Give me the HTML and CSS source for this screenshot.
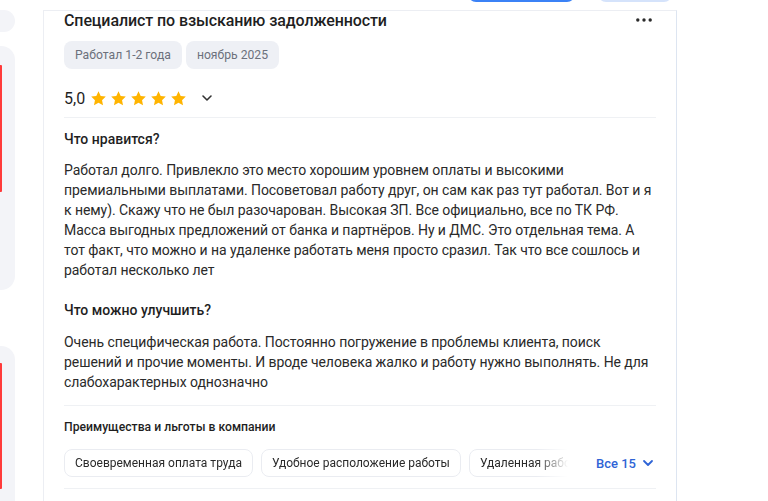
FILE: index.html
```html
<!DOCTYPE html>
<html lang="ru">
<head>
<meta charset="utf-8">
<title>Отзыв</title>
<link rel="stylesheet" href="styles.css">
</head>
<body>
<div class="page">
  <aside class="side">
    <div class="side-card side-card-a"></div>
    <div class="side-card side-card-b"><div class="side-mark side-mark-b"></div></div>
    <div class="side-card side-card-c"><div class="side-mark side-mark-c"></div></div>
  </aside>
  <main class="main">
    <div class="topbar">
      <div class="tbtn tbtn-primary"></div>
      <div class="tbtn tbtn-light"></div>
    </div>
    <section class="card">
      <div class="title-row">
        <h2 class="title">Специалист по взысканию задолженности</h2>
        <svg class="more" width="20" height="6" viewBox="0 0 20 6"><circle cx="1.8" cy="3" r="1.7"/><circle cx="8" cy="3" r="1.7"/><circle cx="14.2" cy="3" r="1.7"/></svg>
      </div>
      <div class="tags">
        <span class="tag">Работал 1-2 года</span>
        <span class="tag">ноябрь 2025</span>
      </div>
      <div class="rating">
        <span class="score">5,0</span>
        <span class="stars">
          <svg class="star" viewBox="0 0 24 24"><path d="M12 1.8l3.1 6.6 7.2.9-5.3 5 1.4 7.2L12 18l-6.4 3.5L7 14.3 1.7 9.3l7.2-.9z"/></svg>
          <svg class="star" viewBox="0 0 24 24"><path d="M12 1.8l3.1 6.6 7.2.9-5.3 5 1.4 7.2L12 18l-6.4 3.5L7 14.3 1.7 9.3l7.2-.9z"/></svg>
          <svg class="star" viewBox="0 0 24 24"><path d="M12 1.8l3.1 6.6 7.2.9-5.3 5 1.4 7.2L12 18l-6.4 3.5L7 14.3 1.7 9.3l7.2-.9z"/></svg>
          <svg class="star" viewBox="0 0 24 24"><path d="M12 1.8l3.1 6.6 7.2.9-5.3 5 1.4 7.2L12 18l-6.4 3.5L7 14.3 1.7 9.3l7.2-.9z"/></svg>
          <svg class="star" viewBox="0 0 24 24"><path d="M12 1.8l3.1 6.6 7.2.9-5.3 5 1.4 7.2L12 18l-6.4 3.5L7 14.3 1.7 9.3l7.2-.9z"/></svg>
        </span>
        <svg class="chev" width="12" height="8" viewBox="0 0 12 8"><path d="M2 2l4 4 4-4" fill="none" stroke="#333" stroke-width="1.6" stroke-linecap="round" stroke-linejoin="round"/></svg>
      </div>
      <div class="divider divider-a"></div>
      <h3 class="sub sub-first">Что нравится?</h3>
      <p class="text">Работал долго. Привлекло это место хорошим уровнем оплаты и высокими премиальными выплатами. Посоветовал работу друг, он сам как раз тут работал. Вот и я к нему). Скажу что не был разочарован. Высокая ЗП. Все официально, все по ТК РФ. Масса выгодных предложений от банка и партнёров. Ну и ДМС. Это отдельная тема. А тот факт, что можно и на удаленке работать меня просто сразил. Так что все сошлось и работал несколько лет</p>
      <h3 class="sub sub-second">Что можно улучшить?</h3>
      <p class="text">Очень специфическая работа. Постоянно погружение в проблемы клиента, поиск решений и прочие моменты. И вроде человека жалко и работу нужно выполнять. Не для слабохарактерных однозначно</p>
      <div class="divider divider-b"></div>
      <h4 class="perks-title">Преимущества и льготы в компании</h4>
      <div class="perks">
        <div class="chips">
          <span class="chip">Своевременная оплата труда</span>
          <span class="chip">Удобное расположение работы</span>
          <span class="chip">Удаленная работа</span>
        </div>
        <span class="all">Все 15
          <svg class="all-chev" width="12" height="8" viewBox="0 0 12 8"><path d="M2 2l4 4 4-4" fill="none" stroke="#2f64d6" stroke-width="1.8" stroke-linecap="round" stroke-linejoin="round"/></svg>
        </span>
      </div>
      <div class="divider divider-c"></div>
    </section>
  </main>
</div>
</body>
</html>
```
FILE: styles.css
```css
* { box-sizing: border-box; }
html, body { margin: 0; padding: 0; }
body {
  width: 768px;
  height: 501px;
  overflow: hidden;
  background: #fff;
  font-family: Roboto, "Liberation Sans", Arial, sans-serif;
  color: #1f1f1f;
}
.page {
  display: flex;
  height: 501px;
}
.side {
  width: 15px;
  flex: none;
  overflow: hidden;
  display: flex;
  flex-direction: column;
}
.side-card {
  width: 15px;
  background: #f3f4f8;
  border-radius: 0 14px 14px 0;
  flex: none;
}
.side-card-a { height: 22px; margin-top: 10px; }
.side-card-b { height: 244px; margin-top: 14px; }
.side-card-c { height: 220px; margin-top: 56px; }
.side-mark {
  width: 2px;
  background: #ff3b3b;
  border-radius: 0 1px 1px 0;
}
.side-mark-b { height: 127px; margin-top: 19px; }
.side-mark-c { height: 126px; margin-top: 17px; }
.main {
  width: 634px;
  margin-left: 28px;
  flex: none;
  display: flex;
  flex-direction: column;
}
.topbar {
  height: 10px;
  display: flex;
  justify-content: flex-end;
  gap: 23px;
  padding-right: 5px;
}
.tbtn {
  height: 30px;
  margin-top: -28px;
  border-radius: 8px;
}
.tbtn-primary { width: 107px; background: #3b82f6; }
.tbtn-light { width: 74px; background: #d5e3fb; }
.card {
  flex: 1;
  border-top: 1px solid #eceef3;
  border-left: 1px solid #eceef3;
  border-right: 1px solid #dde5f1;
  padding: 0 20px 0 20px;
}
.title-row {
  display: flex;
  align-items: center;
  justify-content: space-between;
  height: 20px;
}
.title {
  margin: 0;
  font-size: 16px;
  font-weight: 500;
  line-height: 20px;
  letter-spacing: -0.1px;
  color: #1f1f1f;
}
.more { fill: #2b2b2b; margin-top: -2px; }
.tags {
  display: flex;
  gap: 4px;
  margin-top: 10px;
}
.tag {
  background: #eef0f5;
  color: #6c717c;
  font-size: 12.2px;
  line-height: 28px;
  height: 28px;
  padding: 0 11px;
  border-radius: 8px;
}
.rating {
  display: flex;
  align-items: center;
  height: 24px;
  margin-top: 17px;
}
.score {
  font-size: 16px;
  font-weight: 400;
  color: #1f1f1f;
  margin-right: 5px;
}
.stars { display: flex; gap: 3px; }
.star { width: 17px; height: 17px; fill: #ffb400; }
.chev { margin-left: 14px; }
.divider { height: 1px; background: #eff1f4; }
.divider-a { margin-top: 7px; }
.sub {
  margin: 0;
  font-size: 14px;
  font-weight: 500;
  line-height: 20px;
  color: #1f1f1f;
}
.sub-first { margin-top: 11px; }
.sub-second { margin-top: 20px; }
.text {
  margin: 11px 0 0 0;
  font-size: 14px;
  line-height: 20px;
  letter-spacing: -0.06px;
  color: #2a2a2a;
}
.sub-second + .text { margin-top: 12px; }
.divider-b { margin-top: 13px; }
.perks-title {
  margin: 11px 0 0 0;
  font-size: 12.2px;
  font-weight: 500;
  line-height: 20px;
  color: #1f1f1f;
}
.perks {
  display: flex;
  align-items: center;
  margin-top: 12px;
}
.chips {
  width: 504px;
  flex: none;
  display: flex;
  gap: 8px;
  overflow: hidden;
  -webkit-mask-image: linear-gradient(to right, #000 472px, transparent 504px);
  mask-image: linear-gradient(to right, #000 472px, transparent 504px);
}
.chip {
  flex: none;
  height: 28px;
  line-height: 26px;
  border: 1px solid #eaecf1;
  border-radius: 8px;
  padding: 0 10px;
  font-size: 12px;
  color: #2a2a2a;
  background: #fff;
  white-space: nowrap;
}
.all {
  margin-left: 28px;
  display: flex;
  align-items: center;
  gap: 6px;
  white-space: nowrap;
  color: #2f64d6;
  font-size: 13px;
  font-weight: 500;
}
.divider-c { margin-top: 11px; }
```
